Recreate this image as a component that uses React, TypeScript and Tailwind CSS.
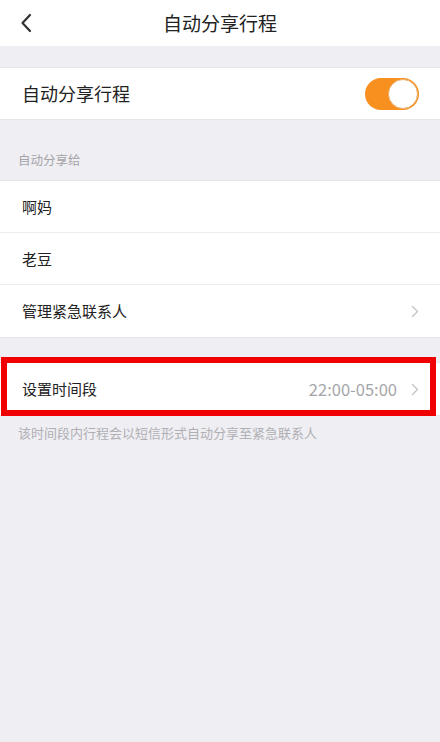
import React from 'react'

const font = { fontFamily: '"Noto Sans CJK SC", "Noto Sans", sans-serif' }

const Chevron: React.FC = () => (
  <svg width="8" height="13" viewBox="0 0 8 13" className="shrink-0">
    <path d="M1.5 1.5 L6.5 6.5 L1.5 11.5" fill="none" stroke="#c4c4c8" strokeWidth="1.4" strokeLinecap="round" strokeLinejoin="round" />
  </svg>
)

const Row: React.FC<{ label: string; value?: string; arrow?: boolean; last?: boolean }> = ({ label, value, arrow, last }) => (
  <div className="relative flex h-[52px] items-center bg-white pl-[22px] pr-[21px]">
    <span className="text-[15px] text-[#222]">{label}</span>
    <div className="ml-auto flex items-center gap-[14px]">
      {value && <span className="text-[16.5px] text-[#a6a6aa]">{value}</span>}
      {arrow && <Chevron />}
    </div>
    {!last && <div className="absolute bottom-0 left-0 right-0 h-px bg-[#ececef]" />}
  </div>
)

const App: React.FC = () => {
  return (
    <div className="h-[742px] w-[440px] overflow-hidden bg-[#efeef3]" style={font}>
      {/* Nav bar */}
      <div className="relative flex h-[46px] items-center justify-center bg-white">
        <svg width="12" height="20" viewBox="0 0 12 20" className="absolute left-[20px] top-[13px]">
          <path d="M10 2 L2.5 10 L10 18" fill="none" stroke="#333" strokeWidth="2.2" strokeLinecap="round" strokeLinejoin="round" />
        </svg>
        <span className="text-[19px] text-[#222]">自动分享行程</span>
      </div>

      {/* Toggle row */}
      <div className="mt-[21px] flex h-[53px] items-center border-y border-[#e6e6ea] bg-white pl-[22px] pr-[21px]">
        <span className="text-[18px] text-[#222]">自动分享行程</span>
        <div className="ml-auto flex h-[32px] w-[54px] items-center justify-end rounded-full bg-[#f7901e] pr-[1px]">
          <div className="h-[30px] w-[30px] rounded-full border border-[#e9b070] bg-white" />
        </div>
      </div>

      {/* Section label */}
      <div className="flex h-[60px] items-end pb-[10px] pl-[18px]">
        <span className="text-[12.5px] text-[#a4a4a8]">自动分享给</span>
      </div>

      <div className="border-y border-[#e6e6ea]">
        <Row label="啊妈" />
        <Row label="老豆" />
        <Row label="管理紧急联系人" arrow last />
      </div>

      {/* Time range */}
      <div className="relative mt-[24px]">
        <div className="border-y border-[#e6e6ea]">
          <Row label="设置时间段" value="22:00-05:00" arrow last />
        </div>
        <div className="pointer-events-none absolute left-[1px] top-[-5px] h-[59px] w-[435px] border-[6px] border-[#f00000]" />
      </div>

      <p className="mt-[7px] pl-[18px] text-[13px] text-[#b0b0b4]">该时间段内行程会以短信形式自动分享至紧急联系人</p>
    </div>
  )
}

export default App
